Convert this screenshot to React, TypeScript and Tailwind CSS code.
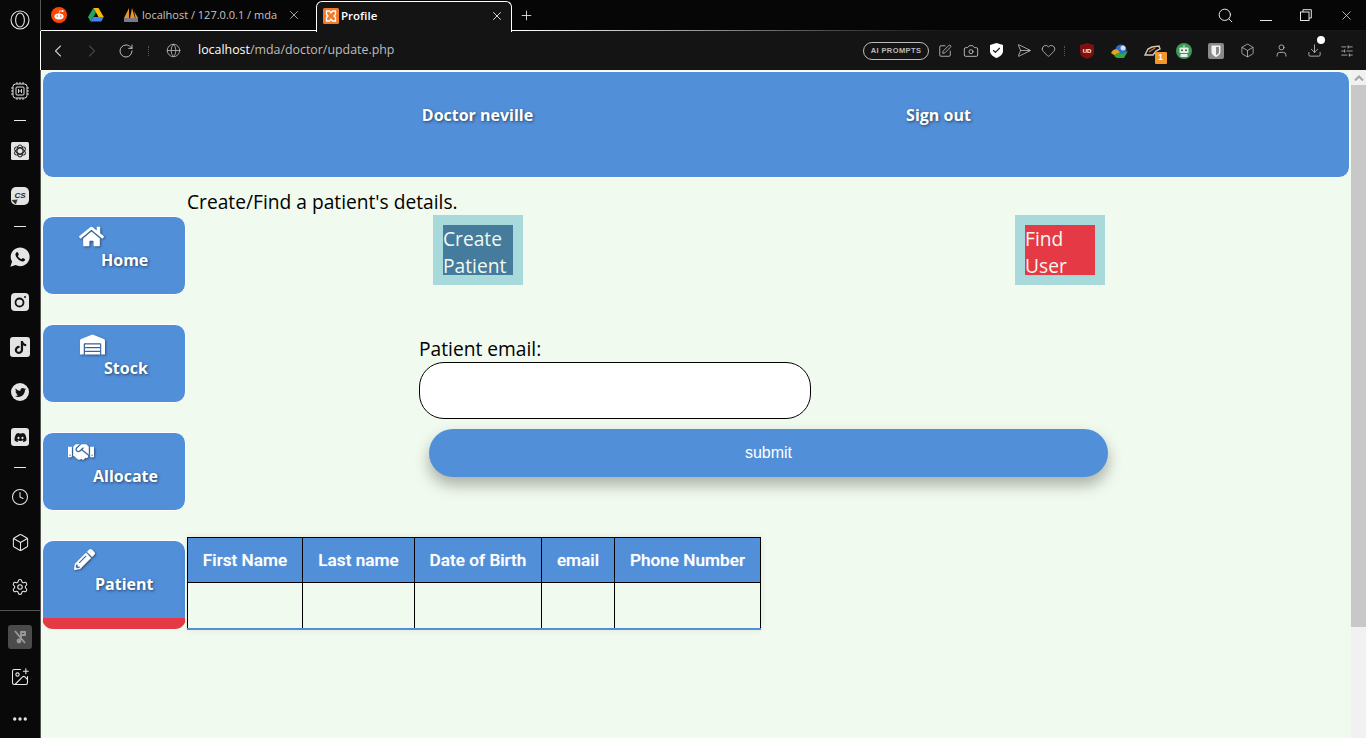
import React from "react";
import { FaHome, FaWarehouse, FaHandshake, FaPencilAlt, FaTwitter, FaDiscord, FaTiktok } from "react-icons/fa";
import { IoLogoWhatsapp } from "react-icons/io";
import { Clock, Box, Settings, ImagePlus, Ellipsis, ChevronLeft, ChevronRight, RotateCw, Globe, X, Plus, Search, Camera, Send, Heart, User, Download, SlidersHorizontal, SquarePen, Check } from "lucide-react";

const Dash = () => <div className="h-px w-3 bg-[#e8e8e8]" />;

const OpenAi = () => (
  <svg viewBox="0 0 18 18" className="w-[18px] h-[18px]">
    <rect width="18" height="18" rx="1.5" fill="#e4e4e4" />
    <g fill="none" stroke="#222" strokeWidth="1.1">
      <ellipse cx="9" cy="9" rx="6" ry="3" transform="rotate(30 9 9)" />
      <ellipse cx="9" cy="9" rx="6" ry="3" transform="rotate(90 9 9)" />
      <ellipse cx="9" cy="9" rx="6" ry="3" transform="rotate(150 9 9)" />
    </g>
  </svg>
);

const Chip = () => (
  <svg viewBox="0 0 18 18" className="w-[18px] h-[18px]" fill="none" stroke="#e8e8e8" strokeWidth="1">
    <rect x="2" y="2" width="14" height="14" rx="2.5" />
    <rect x="5" y="5" width="8" height="8" rx="1" />
    <path d="M7.500 7v4M10.500 7v4M7.500 9h3M0 6h2M0 9h2M0 12h2M16 6h2M16 9h2M16 12h2M6 0v2M9 0v2M12 0v2M6 16v2M9 16v2M12 16v2" strokeWidth=".9" />
  </svg>
);

const Insta = () => (
  <svg viewBox="0 0 18 18" className="w-[18px] h-[18px]">
    <rect width="18" height="18" rx="4" fill="#e4e4e4" />
    <circle cx="8.500" cy="9.500" r="4" fill="none" stroke="#111" strokeWidth="1.800" />
    <circle cx="14" cy="4" r="1" fill="#111" />
  </svg>
);

function RailSlot({ h, children }: { h: number; children: React.ReactNode }) {
  return <div className="flex items-center justify-center w-full shrink-0" style={{ height: h }}>{children}</div>;
}

function Rail() {
  return (
    <div className="w-[41px] h-full shrink-0 bg-[#090909] border-r border-[#555] flex flex-col items-center text-[#e8e8e8]">
      <RailSlot h={40}>
        <svg viewBox="0 0 20 20" className="w-5 h-5" fill="none" stroke="#e4e4e4" strokeWidth="1.1">
          <circle cx="10" cy="10" r="9" />
          <ellipse cx="10" cy="10" rx="4.4" ry="7" />
        </svg>
      </RailSlot>
      <div className="h-[33px] shrink-0" />
      <RailSlot h={36}><Chip /></RailSlot>
      <RailSlot h={22}><Dash /></RailSlot>
      <RailSlot h={40}><OpenAi /></RailSlot>
      <RailSlot h={50}>
        <div className="relative w-[18px] h-[18px] rounded-[5px] bg-[#e4e4e4] text-[#222] flex items-center justify-center text-[8px] font-bold italic [font-family:'Liberation_Sans',sans-serif]">
          CS
          <svg viewBox="0 0 8 8" className="absolute left-0 bottom-0 w-2 h-2"><path d="M0 3 7 2 5 8z" fill="#333" stroke="#e4e4e4" strokeWidth=".6" /></svg>
        </div>
      </RailSlot>
      <RailSlot h={10}><Dash /></RailSlot>
      <RailSlot h={52}><IoLogoWhatsapp size={22} color="#e4e4e4" /></RailSlot>
      <RailSlot h={38}><Insta /></RailSlot>
      <RailSlot h={52}>
        <div className="w-5 h-5 rounded-[3px] bg-[#e4e4e4] flex items-center justify-center"><FaTiktok size={13} color="#111" /></div>
      </RailSlot>
      <RailSlot h={38}>
        <div className="w-[18px] h-[18px] rounded-full bg-[#e4e4e4] flex items-center justify-center"><FaTwitter size={11} color="#111" /></div>
      </RailSlot>
      <RailSlot h={52}>
        <div className="w-[18px] h-[18px] rounded-[3px] bg-[#e4e4e4] flex items-center justify-center"><FaDiscord size={13} color="#111" /></div>
      </RailSlot>
      <RailSlot h={8}><Dash /></RailSlot>
      <RailSlot h={52}><Clock size={18} strokeWidth={1.4} /></RailSlot>
      <RailSlot h={38}><Box size={19} strokeWidth={1.3} /></RailSlot>
      <RailSlot h={52}><Settings size={18} strokeWidth={1.4} /></RailSlot>
      <div className="w-full h-px bg-[#555] shrink-0 mt-[-3px] mb-[14px]" />
      <div className="w-6 h-6 rounded-[3px] bg-[#4b4b4b] flex items-center justify-center shrink-0">
        <svg viewBox="0 0 16 16" className="w-4 h-4" fill="none" stroke="#9a9a9a" strokeWidth="1.800">
          <path d="M3 2 13 14M9 3h4v3H9zM9 3v8" />
          <circle cx="7" cy="12" r="2.400" fill="#9a9a9a" stroke="none" />
        </svg>
      </div>
      <RailSlot h={56}><ImagePlus size={20} strokeWidth={1.3} /></RailSlot>
      <RailSlot h={28}><Ellipsis size={18} strokeWidth={2.4} /></RailSlot>
    </div>
  );
}

const Reddit = () => (
  <svg viewBox="0 0 16 16" className="w-4 h-4">
    <circle cx="8" cy="8" r="8" fill="#ff4500" />
    <ellipse cx="8" cy="9.600" rx="4.600" ry="3" fill="#fff" />
    <circle cx="11.600" cy="4" r="1" fill="#fff" />
    <path d="M8 6.800 8.600 3.800 11 4.200" stroke="#fff" strokeWidth=".7" fill="none" />
    <circle cx="6.300" cy="9" r=".8" fill="#ff4500" />
    <circle cx="9.700" cy="9" r=".8" fill="#ff4500" />
  </svg>
);

const Drive = () => (
  <svg viewBox="0 0 16 14" className="w-4 h-[14px]">
    <path d="M5.300 0h5.200l5.300 9h-5.200z" fill="#fbbc04" />
    <path d="M5.300 0 0 9l2.600 4.600L8 4.500z" fill="#1fa463" />
    <path d="M5.400 9h10.400l-2.600 4.600H2.600z" fill="#4285f4" />
  </svg>
);

const Pma = () => (
  <svg viewBox="0 0 16 16" className="w-4 h-4 shrink-0">
    <path d="M1 11 6 1v10zM7 11 9 1l3 10zM12.500 11 11 4l4 7z" fill="#e8912d" />
    <rect x="1" y="11" width="14" height="4" fill="#7a7a86" />
  </svg>
);

const Xampp = () => (
  <svg viewBox="0 0 16 16" className="w-4 h-4 shrink-0">
    <rect width="16" height="16" rx="1.500" fill="#f27b2a" />
    <path d="M3.500 3h3L8 5l1.500-2h3v3.500L11 8l1.500 1.500V13h-3L8 11l-1.500 2h-3V9.500L5 8 3.500 6.500z" fill="none" stroke="#fff" strokeWidth="1.300" />
  </svg>
);

function TabBar() {
  return (
    <div className="h-[31px] shrink-0 bg-[#060606] flex items-end relative text-[#e6e6e6] [font-family:'Open_Sans',sans-serif] text-[12px]">
      <div className="w-[10px] shrink-0" />
      <div className="w-[17px] h-[30px] pb-[2px] flex items-center"><Reddit /></div>
      <div className="w-[20px]" />
      <div className="w-[17px] h-[30px] pb-[2px] flex items-center"><Drive /></div>
      <div className="w-[18px]" />
      <div className="h-[30px] pb-[2px] w-[178px] flex items-center">
        <Pma />
        <span className="ml-[3px] w-[141px] whitespace-nowrap text-[#c4c4c4] text-[11px]">localhost / 127.0.0.1 / mda</span>
        <X size={14} strokeWidth={1.4} className="ml-[9px] text-[#c4c4c4] shrink-0" />
      </div>
      <div className="w-[15px]" />
      <div className="relative z-10 h-[31px] pb-[2px] w-[196px] mb-[-1px] bg-[#141414] border border-b-0 border-white rounded-t-[6px] flex items-center pl-[6px] text-white font-semibold text-[11.500px]">
        <Xampp />
        <span className="ml-[2px]">Profile</span>
        <X size={14} strokeWidth={1.4} className="ml-auto mr-[7px]" />
      </div>
      <div className="h-[30px] pb-[2px] w-[29px] flex items-center justify-center"><Plus size={15} strokeWidth={1.400} /></div>
      <div className="ml-auto h-[30px] pb-[2px] flex items-center">
        <Search size={17} strokeWidth={1.400} className="mr-[26px]" />
        <span className="w-3 h-px bg-[#e6e6e6] mr-[28px] mt-[10px]" />
        <svg viewBox="0 0 12 12" className="w-3 h-3 mr-[27px]" fill="none" stroke="#e6e6e6"><rect x=".5" y="3" width="8.500" height="8.500" /><path d="M3 3V.7h8.300V9H9" /></svg>
        <X size={15} strokeWidth={1.200} className="mr-[12px]" />
      </div>
      <div className="absolute left-0 right-0 bottom-0 h-px bg-[linear-gradient(90deg,#fff_0,#fff_480px,#444_800px,#181818_900px)]" />
    </div>
  );
}

function ToolSlot({ w, children }: { w: number; children: React.ReactNode }) {
  return <div className="flex items-center justify-center shrink-0 h-full" style={{ width: w }}>{children}</div>;
}

function Toolbar() {
  return (
    <div className="h-[39px] shrink-0 bg-[#141414] border-l border-white -ml-px relative flex items-center text-[#c8c8c8] [font-family:'Open_Sans',sans-serif]">
      <ToolSlot w={34}><ChevronLeft size={20} strokeWidth={1.300} /></ToolSlot>
      <ToolSlot w={34}><ChevronRight size={20} strokeWidth={1.300} className="text-[#444]" /></ToolSlot>
      <ToolSlot w={33}><RotateCw size={16} strokeWidth={1.400} /></ToolSlot>
      <ToolSlot w={12}><span className="h-[10px] border-l border-dotted border-[#555]" /></ToolSlot>
      <ToolSlot w={38}><Globe size={15} strokeWidth={1.200} /></ToolSlot>
      <div className="ml-[6px] text-[12.400px] whitespace-nowrap text-[#bdbdbd]"><span className="text-white">localhost</span>/mda/doctor/update.php</div>
      <div className="ml-auto flex items-center h-full pr-px">
        <div className="w-[66px] h-[18px] border border-[#bbb] rounded-full flex items-center justify-center text-[7.500px] tracking-[0.4px] font-semibold text-[#bbb] [font-family:'Liberation_Sans',sans-serif]">AI PROMPTS</div>
        <div className="w-[6px]" />
        <ToolSlot w={20}><SquarePen size={14} strokeWidth={1.400} /></ToolSlot>
        <ToolSlot w={32}><Camera size={16} strokeWidth={1.300} /></ToolSlot>
        <ToolSlot w={19}>
          <div className="relative w-[13px] h-[15px] flex items-center justify-center">
            <svg viewBox="0 0 13 15" className="w-[13px] h-[15px]"><path d="M6.500 0 13 2v6c0 3.500-3 5.500-6.500 7C3 13.500 0 11.500 0 8V2z" fill="#fff" /></svg>
            <Check size={9} strokeWidth={3} className="absolute text-[#141414]" />
          </div>
        </ToolSlot>
        <ToolSlot w={34}><Send size={15} strokeWidth={1.200} className="rotate-45 -ml-[4px]" /></ToolSlot>
        <ToolSlot w={16}><Heart size={15} strokeWidth={1.300} className="shrink-0" /></ToolSlot>
        <ToolSlot w={17}><span className="h-[10px] border-l border-dotted border-[#555]" /></ToolSlot>
        <ToolSlot w={28}>
          <svg viewBox="0 0 14 16" className="w-[14px] h-4"><path d="M7 0 14 2v7c0 4-4 6-7 7-3-1-7-3-7-7V2z" fill="#800f13" /><text x="7" y="9.500" textAnchor="middle" fontSize="6" fontWeight="700" fill="#fff" fontFamily="Liberation Sans">UD</text></svg>
        </ToolSlot>
        <ToolSlot w={38}>
          <svg viewBox="0 0 18 14" className="w-[18px] h-[14px]"><circle cx="10" cy="6" r="5.500" fill="#2a6fd0" /><circle cx="12" cy="4" r="2.500" fill="#d8dde6" /><path d="M0 9c2-4 5-5 8-2l1 4H3z" fill="#e8a020" /><path d="M3 12c2-3 5-4 8-2l6-3-4 7H6z" fill="#2fa83c" /></svg>
        </ToolSlot>
        <ToolSlot w={28}>
          <div className="relative">
            <svg viewBox="0 0 17 12" className="w-[17px] h-3 -ml-[2px]" fill="none" stroke="#d8c8b8" strokeWidth="1.400"><path d="M1 10 4 4l4-2 7-1 1 3-4 2-3 4H4z" /><path d="M5 7 11 3" stroke="#c57a3a" /></svg>
            <div className="absolute left-[9px] top-[7px] w-3 h-3 bg-[#f0982a] text-white text-[9px] font-bold flex items-center justify-center rounded-[1px] [font-family:'Liberation_Sans',sans-serif]">1</div>
          </div>
        </ToolSlot>
        <ToolSlot w={34}>
          <svg viewBox="0 0 16 16" className="w-4 h-4"><circle cx="8" cy="8" r="8" fill="#3f9a5a" /><rect x="3.500" y="4.500" width="9" height="5.500" rx="1" fill="#e6efe8" /><circle cx="6" cy="7.200" r="1" fill="#2b6a3d" /><circle cx="10" cy="7.200" r="1" fill="#2b6a3d" /><path d="M8 4.500V2" stroke="#e6efe8" /><rect x="4.500" y="11" width="7" height="3" fill="#e6efe8" /></svg>
        </ToolSlot>
        <ToolSlot w={30}>
          <svg viewBox="0 0 16 16" className="w-4 h-4"><rect width="16" height="16" rx="2" fill="#8a8a8a" /><path d="M3.500 2.500h9V9c0 2.500-2.500 4-4.500 5-2-1-4.500-2.500-4.500-5z" fill="#f2f2f2" /><path d="M8 4h3v5c0 1.500-1.500 2.500-3 3.200z" fill="#8a8a8a" /></svg>
        </ToolSlot>
        <ToolSlot w={32}><Box size={15} strokeWidth={1.200} /></ToolSlot>
        <ToolSlot w={36}><User size={15} strokeWidth={1.300} /></ToolSlot>
        <ToolSlot w={30}>
          <div className="relative">
            <Download size={15} strokeWidth={1.300} />
            <div className="absolute left-[10px] top-[-7px] w-2 h-2 rounded-full bg-white" />
          </div>
        </ToolSlot>
        <ToolSlot w={36}><SlidersHorizontal size={14} strokeWidth={1.300} /></ToolSlot>
      </div>
    </div>
  );
}

const glow = "[text-shadow:1px_1px_3px_rgba(0,0,0,0.55)]";
const iconGlow = "drop-shadow-[1px_1px_1px_rgba(0,0,0,0.45)]";

function NavCard({ icon, label, active, iconPad, textPad }: { icon: React.ReactNode; label: string; active?: boolean; iconPad: string; textPad: string }) {
  return (
    <div className={`w-[144px] rounded-[11px] bg-[#528fd9] border border-white overflow-hidden text-white font-bold text-[16px] ${active ? "h-[89px] border-b-[11px] border-b-[#e63946]" : "h-[79px]"}`}>
      <div className={`flex items-center h-[31px] ${iconPad}`}>{icon}</div>
      <div className={`whitespace-nowrap leading-[22px] mt-px ${glow} ${textPad}`}>{label}</div>
    </div>
  );
}

const th = "border border-black bg-[#528fd9] text-white font-medium text-[17.200px] p-0 pt-px h-[45px] [font-family:Roboto,sans-serif] [text-shadow:0_0_1px_rgba(255,255,255,0.5)]";
const td = "border-x border-black p-0 h-[46px] border-b-2 border-b-[#528fd9]";

function Page() {
  return (
    <div className="flex-1 min-h-0 flex bg-[#f1faee] text-black [font-family:'Open_Sans',sans-serif]">
      <div className="flex-1 min-w-0 pl-px pr-px overflow-hidden">
        <header className="h-[107px] mt-px rounded-[11px] bg-[#528fd9] border border-white flex items-center pl-[204px] pb-[19px] text-white font-bold text-[16px] [text-shadow:1px_1px_3px_rgba(0,0,0,0.55)]">
          <div className="w-[461px] text-center">Doctor neville</div>
          <div className="w-[461px] text-center">Sign out</div>
        </header>
        <div className="flex mt-[10px]">
          <nav className="w-[145px] shrink-0 flex flex-col gap-[29px] pt-[28px]">
            <NavCard icon={<FaHome size={25} className={iconGlow} />} label="Home" iconPad="pl-[36px] pt-[8px]" textPad="pl-[58px]" />
            <NavCard icon={<FaWarehouse size={25} className={iconGlow} />} label="Stock" iconPad="pl-[37px] pt-[8px]" textPad="pl-[61px]" />
            <NavCard icon={<FaHandshake size={26} className={iconGlow} />} label="Allocate" iconPad="pl-[25px] pt-[6px]" textPad="pl-[50px]" />
            <NavCard active icon={<FaPencilAlt size={21} className={iconGlow} />} label="Patient" iconPad="pl-[31px] pt-[6px]" textPad="pl-[52px]" />
          </nav>
          <main className="flex-1 min-w-0">
            <h1 className="text-[19.200px] leading-[27px] font-normal whitespace-nowrap">Create/Find a patient's details.</h1>
            <div className="flex w-[672px] ml-[246px] justify-between">
              <div className="w-[90px] h-[70px] bg-[#a8dadc] p-[10px]">
                <div className="h-[50px] bg-[#457b9d] text-[#f1faee] text-[19.200px] leading-[27px]">Create Patient</div>
              </div>
              <div className="w-[90px] h-[70px] bg-[#a8dadc] p-[10px]">
                <div className="h-[50px] bg-[#e63946] text-[#f1faee] text-[19.200px] leading-[27px]">Find User</div>
              </div>
            </div>
            <div className="ml-[232px] mt-[50px] text-[19.200px] leading-[27px]">Patient email:</div>
            <div className="ml-[232px] w-[392px] h-[57px] bg-white border border-black rounded-[25px]" />
            <button className="block ml-[242px] mt-[10px] w-[679px] h-[48px] rounded-[24px] bg-[#528fd9] text-white text-[16px] [font-family:'Liberation_Sans',sans-serif] shadow-[0_8px_15px_rgba(0,0,0,0.3)]">submit</button>
            <table className="mt-[60px] border-collapse table-fixed w-[573px] shadow-[0_0_8px_rgba(0,0,0,0.08)]">
              <colgroup>
                <col className="w-[115px]" />
                <col className="w-[112px]" />
                <col className="w-[127px]" />
                <col className="w-[73px]" />
                <col className="w-[146px]" />
              </colgroup>
              <thead>
                <tr>
                  <th className={th}>First Name</th>
                  <th className={th}>Last name</th>
                  <th className={th}>Date of Birth</th>
                  <th className={th}>email</th>
                  <th className={th}>Phone Number</th>
                </tr>
              </thead>
              <tbody>
                <tr>
                  <td className={td} />
                  <td className={td} />
                  <td className={td} />
                  <td className={td} />
                  <td className={td} />
                </tr>
              </tbody>
            </table>
          </main>
        </div>
      </div>
      <div className="w-[15px] shrink-0 bg-[#f1f1f1] flex flex-col items-center">
        <div className="h-[15px] w-full flex items-center justify-center">
          <svg viewBox="0 0 10 6" className="w-[10px] h-[6px]" fill="none" stroke="#a3a3a3" strokeWidth="2"><path d="M1 5.500 5 1.500 9 5.500" /></svg>
        </div>
        <div className="w-full h-[542px] bg-[#c8c8c8]" />
      </div>
    </div>
  );
}

export default function App() {
  return (
    <div className="w-[1366px] h-[738px] flex overflow-hidden bg-[#060606]">
      <Rail />
      <div className="flex-1 min-w-0 flex flex-col">
        <TabBar />
        <Toolbar />
        <Page />
      </div>
    </div>
  );
}
